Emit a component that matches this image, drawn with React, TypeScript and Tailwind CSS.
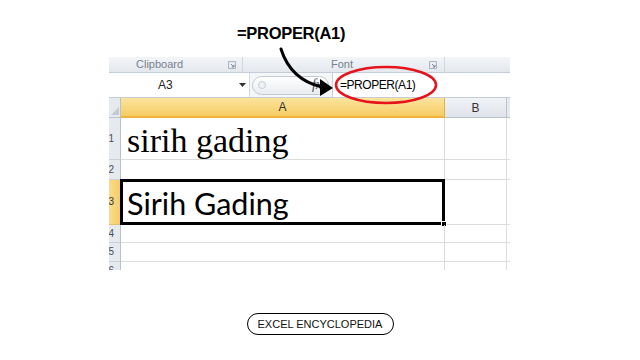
const sans = { fontFamily: '"Liberation Sans", Arial, sans-serif' };

function Launcher() {
  return (
    <svg width="8" height="8" viewBox="0 0 8 8" className="shrink-0">
      <path d="M0.5 0.5H7.5V7.5H0.5Z" fill="none" stroke="#a9b3bf" strokeWidth="1" />
      <path d="M3 3L6 6M6 3.8V6H3.8" fill="none" stroke="#7d8794" strokeWidth="1" />
    </svg>
  );
}

function RowHead({ n, h, active }: { n: number; h: string; active?: boolean }) {
  return (
    <div
      className={`${h} w-[12px] shrink-0 overflow-hidden border-r border-b flex items-center justify-end pr-[6px] text-[10px] ${
        active
          ? "bg-gradient-to-r from-[#f9dc8a] to-[#f6cd67] border-r-[#e5a83a] border-b-[#e3c06e] text-[#333]"
          : "bg-[#e6eaef] border-r-[#b8c2cd] border-b-[#c9d1da] text-[#454f5b]"
      }`}
    >
      <span className="leading-none">{n}</span>
    </div>
  );
}

function Row({
  n,
  h,
  active,
  children,
}: {
  n: number;
  h: string;
  active?: boolean;
  children?: React.ReactNode;
}) {
  return (
    <div className={`flex ${h}`}>
      <RowHead n={n} h={h} active={active} />
      <div className="relative w-[324px] shrink-0 border-r border-b border-[#dadcdd] flex items-center">
        {children}
      </div>
      <div className="w-[62px] shrink-0 border-r border-b border-[#dadcdd]" />
      <div className="flex-1 border-b border-[#dadcdd]" />
    </div>
  );
}

export default function App() {
  return (
    <div className="relative w-[640px] h-[360px] bg-white overflow-hidden" style={sans}>
      {/* callout text */}
      <div className="h-[57px] pl-[237px] pt-[22px]">
        <span className="text-[16.5px] font-bold leading-none tracking-[-0.3px] text-black">
          =PROPER(A1)
        </span>
      </div>

      {/* excel screenshot */}
      <div className="ml-[109px] w-[401px] h-[213px] overflow-hidden bg-white">
        {/* ribbon group labels */}
        <div className="flex h-[16px] border-b border-[#c5ccd5] bg-gradient-to-b from-[#f3f5f8] to-[#e4e8ed] text-[11px] text-[#76818f]">
          <div className="w-[134px] flex items-center justify-between pl-[27px] pr-[6px] border-r border-[#d0d6de]">
            <span className="leading-none">Clipboard</span>
            <Launcher />
          </div>
          <div className="w-[202px] flex items-center justify-between pl-[88px] pr-[7px] border-r border-[#d0d6de]">
            <span className="leading-none">Font</span>
            <Launcher />
          </div>
          <div className="flex-1" />
        </div>

        {/* formula bar */}
        <div className="flex h-[25px] border-b border-[#c5ccd5] bg-white">
          <div className="w-[141px] flex items-center justify-between pl-[49px] pr-[3px] border-r border-[#d5dbe2]">
            <span className="text-[12px] text-[#222]">A3</span>
            <svg width="7" height="4" viewBox="0 0 7 4">
              <path d="M0 0H7L3.5 4Z" fill="#333" />
            </svg>
          </div>
          <div className="w-[83px] flex items-center bg-[#f4f6f8] pl-[2px] pr-[3px] border-r border-[#c8cfd8]">
            <div className="h-[19px] flex-1 rounded-full border border-[#c3cad3] bg-gradient-to-b from-white to-[#e9ecf0] flex items-center pl-[5px] pr-[6px]">
              <div className="h-[8px] w-[8px] rounded-full border border-[#c9cfd6] bg-[#eef1f4]" />
              <span
                className="ml-auto italic text-[14px] text-[#555] leading-none"
                style={{ fontFamily: '"Liberation Serif", serif' }}
              >
                fx
              </span>
            </div>
          </div>
          <div className="flex-1 flex items-center pl-[7px]">
            <span className="text-[12px] text-black tracking-[-0.45px]">=PROPER(A1)</span>
          </div>
        </div>

        {/* column headers */}
        <div className="flex h-[20px]">
          <div className="relative w-[12px] shrink-0 bg-[#e6eaef] border-r border-b border-[#b8c2cd]">
            <svg className="absolute right-[1px] bottom-[2px]" width="8" height="8" viewBox="0 0 8 8">
              <path d="M8 0V8H0Z" fill="#c4cbd3" />
            </svg>
          </div>
          <div className="w-[324px] shrink-0 flex items-center justify-center bg-gradient-to-b from-[#fbe49c] to-[#f6cc63] border-r border-[#e5b04a] border-b-2 border-b-[#f0b33c] text-[12px] text-[#333]">
            A
          </div>
          <div className="w-[62px] shrink-0 flex items-center justify-center bg-gradient-to-b from-[#f1f3f6] to-[#dfe4ea] border-r border-b border-[#b8c2cd] text-[12px] text-[#333]">
            B
          </div>
          <div className="flex-1 bg-[#e6eaef] border-b border-[#b8c2cd]" />
        </div>

        <Row n={1} h="h-[42px]">
          <span
            className="pl-[6px] pt-[4px] text-[34px] text-black leading-none"
            style={{ fontFamily: '"Liberation Serif", "Times New Roman", serif' }}
          >
            sirih gading
          </span>
        </Row>
        <Row n={2} h="h-[20px]" />
        <Row n={3} h="h-[45px]" active>
          <div className="absolute -left-[1px] -top-[1px] -right-[1px] -bottom-[1px] border-[3px] border-black" />
          <div className="absolute -right-[3px] -bottom-[3px] w-[6px] h-[6px] bg-black border border-white" />
          <span
            className="pl-[6px] pt-[2px] text-[30.5px] text-black leading-none"
            style={{ fontFamily: 'Lato, "Noto Sans", sans-serif' }}
          >
            Sirih Gading
          </span>
        </Row>
        <Row n={4} h="h-[18px]" />
        <Row n={5} h="h-[19px]" />
        <Row n={6} h="h-[19px]" />
      </div>

      {/* credit pill */}
      <div className="flex justify-center mt-[43px]">
        <div className="h-[22px] w-[147px] rounded-full border border-black flex items-center justify-center text-[11px] text-[#111]">
          EXCEL ENCYCLOPEDIA
        </div>
      </div>

      {/* arrow annotation */}
      <svg className="absolute left-0 top-0 pointer-events-none" width="640" height="360" viewBox="0 0 640 360">
        <path d="M281 49 C 287 68, 300 82, 322 87" fill="none" stroke="#000" strokeWidth="3" strokeLinecap="round" />
        <path d="M320 79 L333 88 L320 96 Z" fill="#000" />
        <ellipse cx="386" cy="85" rx="50" ry="18" fill="none" stroke="#e5141c" strokeWidth="2.5" />
      </svg>
    </div>
  );
}
